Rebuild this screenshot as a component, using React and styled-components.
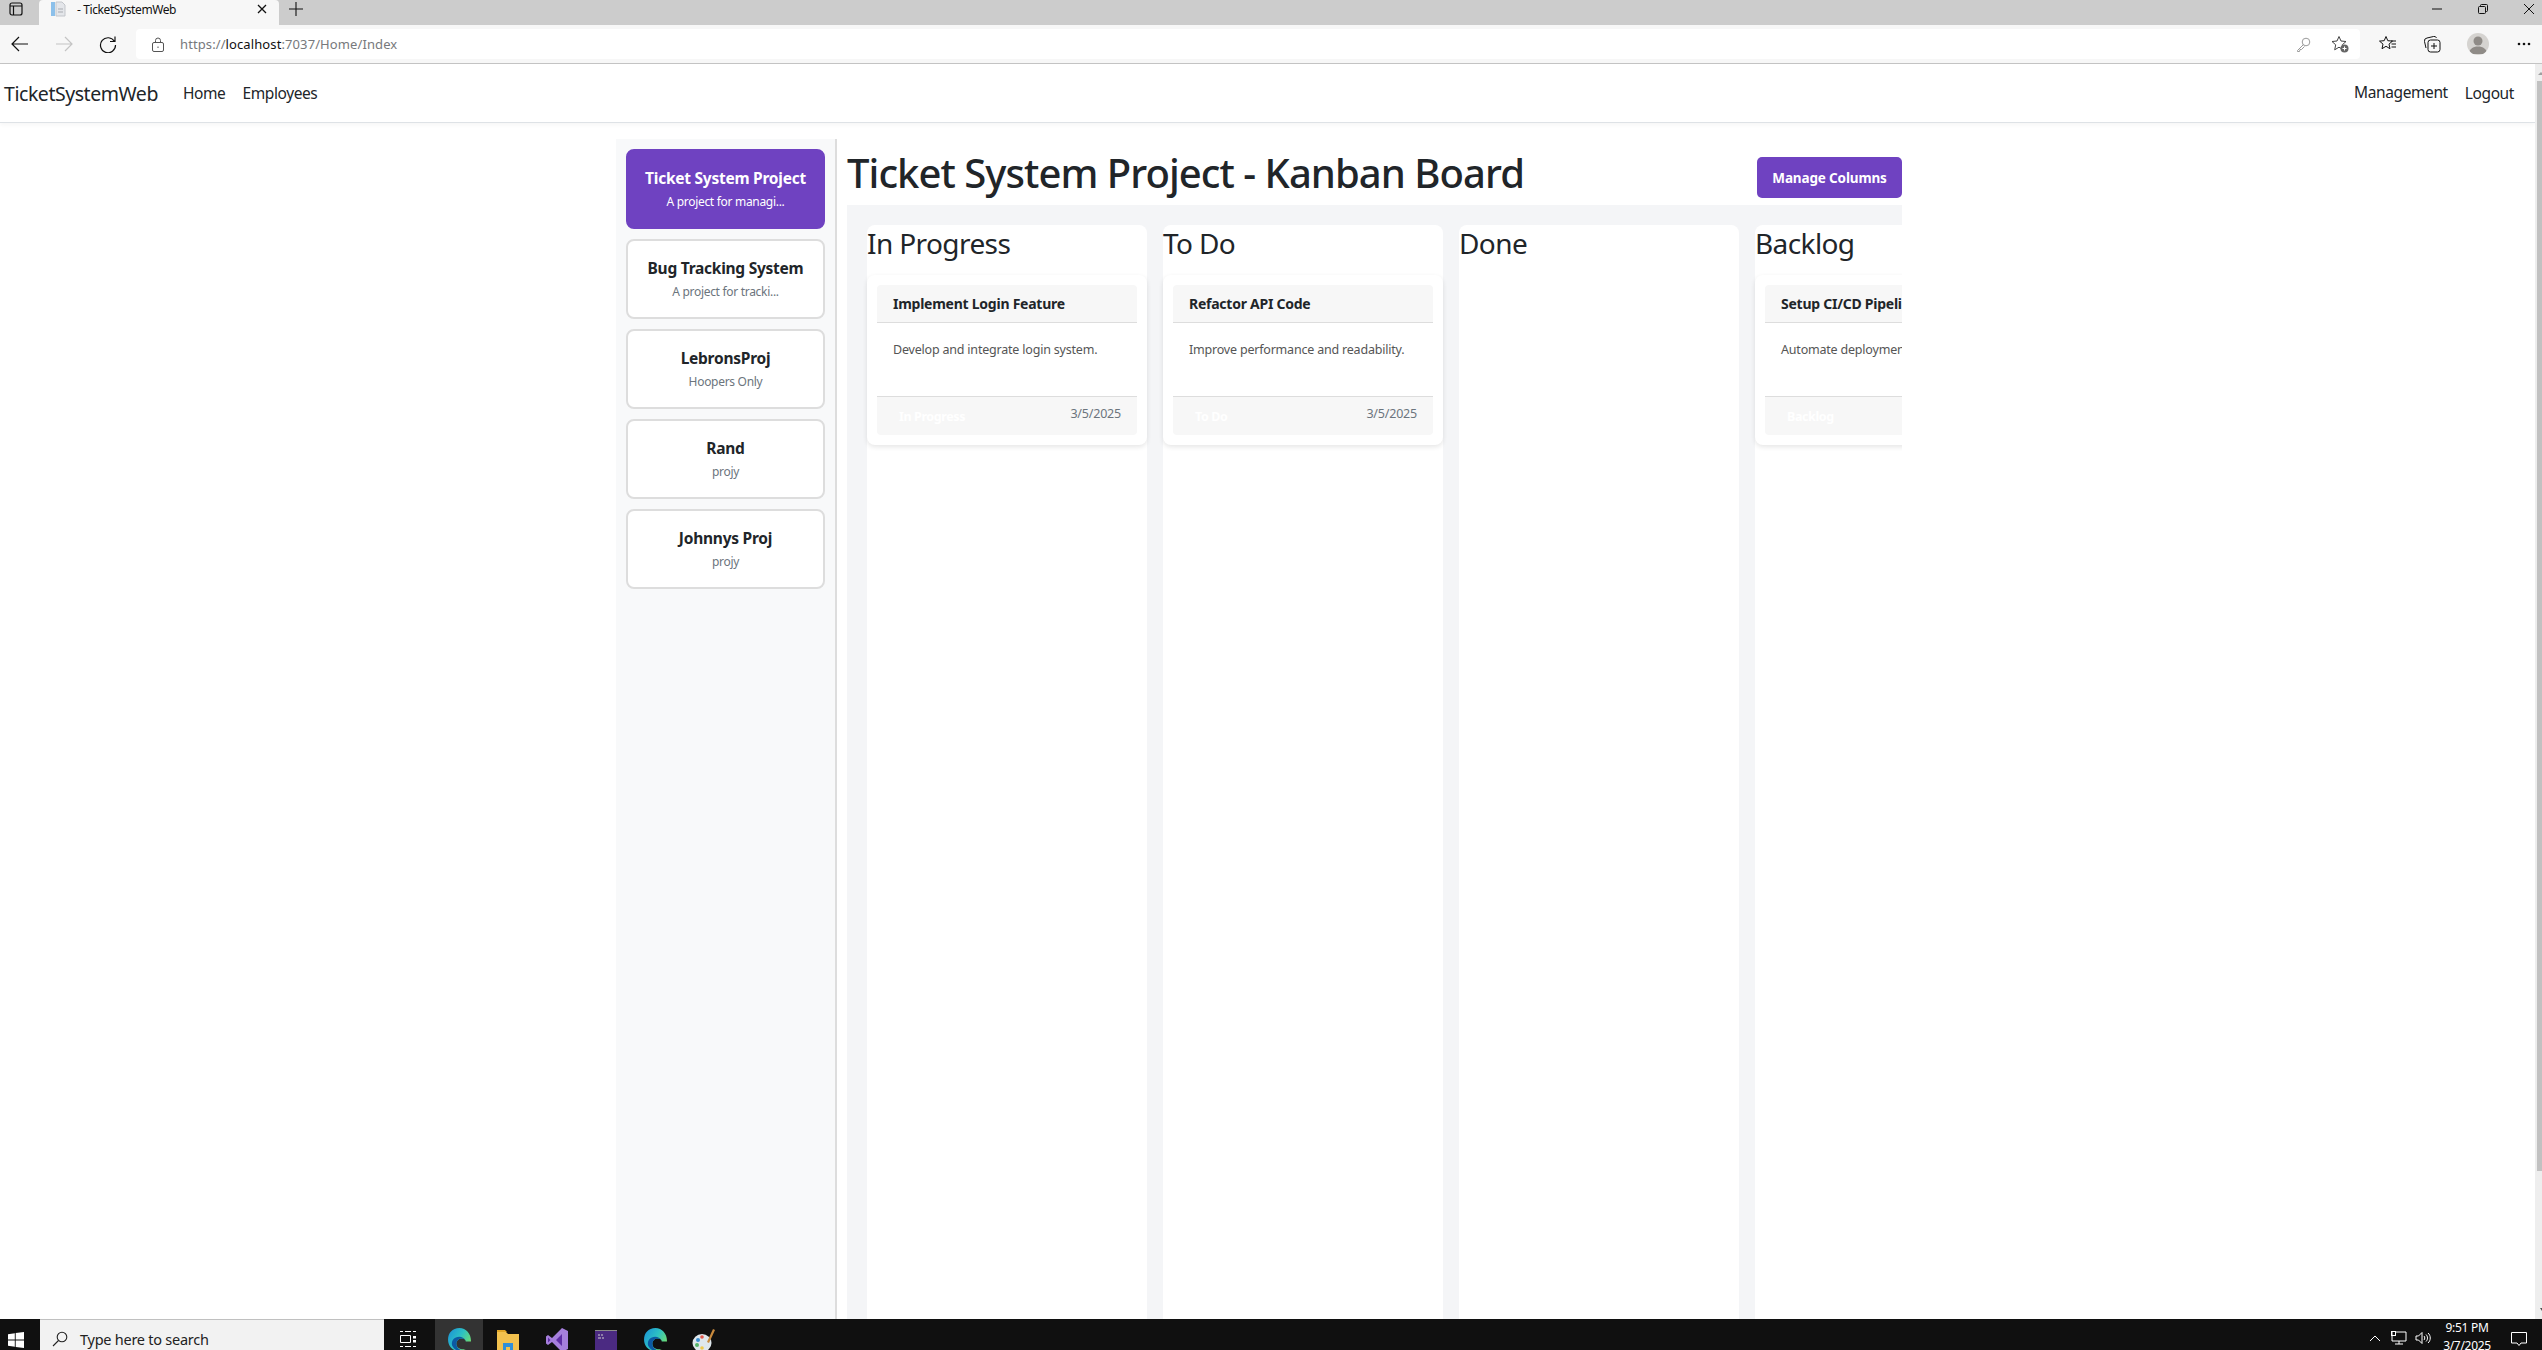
import React from "react";
import styled, { createGlobalStyle } from "styled-components";

const font = `"Noto Sans", "Open Sans", "Liberation Sans", sans-serif`;

const Global = createGlobalStyle`
  html, body { margin: 0; padding: 0; height: 100%; background: #fff; overflow: hidden; }
  * { box-sizing: border-box; }
`;

const Screen = styled.div`
  width: 2542px;
  height: 1350px;
  display: flex;
  flex-direction: column;
  overflow: hidden;
  font-family: ${font};
  color: #212529;
`;

/* browser chrome */
const TabStrip = styled.div`
  height: 25px;
  flex: none;
  background: #cccccc;
  display: flex;
  align-items: stretch;
`;

const TabSide = styled.div`
  width: 39px;
  display: flex;
  align-items: center;
  justify-content: center;
  padding: 0 7px 7px 0;
`;

const Tab = styled.div`
  width: 240px;
  background: #f7f7f7;
  border-radius: 4px 4px 0 0;
  display: flex;
  align-items: center;
  padding: 0 12px 7px 11px;
  font-size: 12px;
  color: #111;
  letter-spacing: -0.4px;
`;

const TabTitle = styled.span`
  flex: 1;
  margin-left: 11px;
`;

const NewTab = styled.div`
  width: 34px;
  display: flex;
  align-items: center;
  justify-content: center;
  padding-bottom: 7px;
`;

const WindowButtons = styled.div`
  margin-left: auto;
  display: flex;
  align-items: center;
  gap: 36px;
  padding: 0 8px 7px 0;
`;

const Toolbar = styled.div`
  height: 39px;
  flex: none;
  background: #f7f7f7;
  border-bottom: 1px solid #c4c4c4;
  padding-top: 4px;
  display: flex;
  align-items: flex-start;
`;

const ToolButton = styled.div`
  width: 40px;
  height: 30px;
  flex: none;
  margin-right: ${(p) => p.$gap}px;
  display: flex;
  align-items: center;
  justify-content: center;
`;

const AddressBar = styled.div`
  flex: 1;
  height: 30px;
  background: #fff;
  border-radius: 4px;
  display: flex;
  align-items: center;
  padding: 0 11px 0 15px;
  font-size: 13px;
  color: #77797c;
  letter-spacing: 0.1px;
`;

const LockIcon = styled.svg`
  margin-right: 15px;
`;

const Host = styled.span`
  color: #111;
`;

const AddressIcons = styled.div`
  margin-left: auto;
  display: flex;
  align-items: center;
  gap: 20px;
`;

const ToolRight = styled.div`
  width: 182px;
  height: 30px;
  flex: none;
  display: flex;
  align-items: center;
  gap: 26px;
  padding-left: 19px;
`;

const Avatar = styled.div`
  width: 22px;
  height: 22px;
  border-radius: 50%;
  background: #d5d3d0;
  overflow: hidden;
`;

const MoreDots = styled.svg`
  margin-left: 2px;
`;

/* page */
const Viewport = styled.div`
  flex: 1;
  min-height: 0;
  display: flex;
`;

const Page = styled.div`
  flex: 1;
  min-width: 0;
  display: flex;
  flex-direction: column;
`;

const Navbar = styled.nav`
  height: 59px;
  flex: none;
  background: #fff;
  border-bottom: 1px solid #dee2e6;
  box-shadow: 0 2px 4px rgba(0, 0, 0, 0.04);
  display: flex;
  align-items: center;
  padding: 0 21px 0 4px;
  font-size: 15.5px;
  letter-spacing: -0.4px;
`;

const Brand = styled.span`
  font-size: 19.5px;
  margin-right: 25px;
  letter-spacing: -0.45px;
`;

const NavLink = styled.span`
  margin-right: ${(p) => p.$gap}px;
  position: relative;
  top: ${(p) => (p.$up ? -1 : 0)}px;
`;

const NavRight = styled.div`
  margin-left: auto;
  display: flex;
  align-items: center;
`;

const Content = styled.div`
  flex: 1;
  min-height: 0;
  display: flex;
  padding: 16px 0 0 616px;
`;

const Sidebar = styled.aside`
  width: 221px;
  flex: none;
  background: #f8f9fa;
  border-right: 2px solid #dddddd;
  padding: 10px 10px 0 10px;
  display: flex;
  flex-direction: column;
  gap: 10px;
`;

const ProjectCard = styled.div`
  width: 199px;
  height: 80px;
  border-radius: 8px;
  border: 2px solid ${(p) => (p.$active ? "#6f42c1" : "#dddddd")};
  background: ${(p) => (p.$active ? "#6f42c1" : "#fff")};
  color: ${(p) => (p.$active ? "#fff" : "#212529")};
  display: flex;
  flex-direction: column;
  align-items: center;
  text-align: center;
  padding-top: 15px;
`;

const ProjectName = styled.div`
  font-size: 15.5px;
  font-weight: 700;
  line-height: 24px;
  letter-spacing: -0.25px;
  white-space: nowrap;
`;

const ProjectDesc = styled.div`
  font-size: 12px;
  line-height: 18px;
  margin-top: 3px;
  color: ${(p) => (p.$active ? "#fff" : "#6c757d")};
  letter-spacing: -0.3px;
  white-space: nowrap;
`;

const Main = styled.main`
  width: 1055px;
  margin-left: 10px;
  flex: none;
  display: flex;
  flex-direction: column;
  min-height: 0;
`;

const Header = styled.header`
  height: 66px;
  flex: none;
  display: flex;
  align-items: flex-start;
  justify-content: space-between;
`;

const Title = styled.h1`
  margin: 6px 0 0;
  font-size: 40px;
  font-weight: 500;
  line-height: 56px;
  letter-spacing: -0.95px;
  white-space: nowrap;
`;

const ManageButton = styled.button`
  width: 145px;
  height: 41px;
  margin-top: 18px;
  border: none;
  border-radius: 5px;
  background: #6f42c1;
  color: #fff;
  font-family: ${font};
  font-size: 13.5px;
  font-weight: 700;
  letter-spacing: -0.15px;
  padding: 0;
`;

const Board = styled.div`
  flex: 1;
  min-height: 0;
  background: #f4f5f7;
  padding: 20px 0 0 20px;
  display: flex;
  gap: 16px;
  overflow: hidden;
`;

const Column = styled.section`
  width: 280px;
  flex: none;
  background: #fff;
  border-radius: 8px 8px 0 0;
`;

const ColumnTitle = styled.h2`
  margin: 0 0 13px;
  font-size: 28px;
  font-weight: 400;
  line-height: 37px;
  letter-spacing: -0.6px;
`;

const TaskCard = styled.article`
  height: 170px;
  background: #fff;
  border-radius: 8px;
  box-shadow: 0 2px 5px rgba(0, 0, 0, 0.1);
  padding: 10px;
  display: flex;
  flex-direction: column;
`;

const TaskHeader = styled.div`
  height: 38px;
  flex: none;
  background: #f7f7f7;
  border-bottom: 1px solid #dddddd;
  border-radius: 4px 4px 0 0;
  padding: 0 16px;
  display: flex;
  align-items: center;
  font-size: 14px;
  font-weight: 700;
  letter-spacing: -0.25px;
  white-space: nowrap;
  overflow: hidden;
`;

const TaskBody = styled.div`
  flex: 1;
  padding: 17px 16px 0;
  font-size: 12.5px;
  line-height: 20px;
  color: #555;
  letter-spacing: -0.2px;
  white-space: nowrap;
  overflow: hidden;
`;

const TaskFooter = styled.div`
  height: 39px;
  flex: none;
  background: #f7f7f7;
  border-top: 1px solid #dddddd;
  border-radius: 0 0 4px 4px;
  padding: 0 16px 5px 22px;
  display: flex;
  align-items: center;
  justify-content: space-between;
`;

const StatusBadge = styled.span`
  color: #fff;
  font-size: 12.5px;
  font-weight: 700;
  letter-spacing: -0.4px;
  position: relative;
  top: 3px;
`;

const TaskDate = styled.span`
  color: #6c757d;
  font-size: 12.5px;
  letter-spacing: -0.2px;
`;

const Scrollbar = styled.div`
  width: 7px;
  flex: none;
  background: #eeeeee;
  padding-top: 7px;
  display: flex;
  flex-direction: column;
`;

const ScrollThumb = styled.div`
  width: 5px;
  height: 1090px;
  margin: 6px 0 0 2px;
  background: #c1c1c1;
`;

const DownArrow = styled.svg`
  margin: auto 0 7px;
`;

/* windows taskbar, cut off by the bottom of the screen */
const Taskbar = styled.div`
  height: 31px;
  flex: none;
  background: #101010;
  display: flex;
  overflow: hidden;
  color: #fff;
`;

const StartButton = styled.div`
  width: 40px;
  flex: none;
  display: flex;
  align-items: flex-start;
  justify-content: center;
  padding: 13px 8px 0 0;
`;

const SearchBox = styled.div`
  width: 344px;
  flex: none;
  background: #f2f2f2;
  border-top: 1px solid #c0c0c0;
  color: #222;
  display: flex;
  align-items: center;
  gap: 12px;
  padding: 8px 0 0 12px;
  font-size: 14.5px;
  letter-spacing: -0.25px;
`;

const TaskIcon = styled.div`
  width: 48px;
  flex: none;
  margin-right: ${(p) => p.$gap ?? 1}px;
  display: flex;
  align-items: flex-start;
  justify-content: center;
  padding-top: ${(p) => p.$top}px;
  background: ${(p) => (p.$active ? "#333333" : "transparent")};
`;

const Tray = styled.div`
  margin-left: auto;
  display: flex;
  align-items: flex-start;
  padding-top: 12px;
`;

const TrayIcon = styled.div`
  width: 24px;
  display: flex;
  justify-content: center;
`;

const Chevron = styled.svg`
  margin-top: 3px;
`;

const Clock = styled.div`
  width: 58px;
  margin: -12px 0 0 3px;
  text-align: center;
  font-size: 12px;
  line-height: 18px;
  letter-spacing: -0.3px;
  white-space: nowrap;
`;

const Notify = styled.div`
  width: 46px;
  display: flex;
  justify-content: center;
`;

const Favicon = () => (
  <svg width="16" height="16" viewBox="0 0 16 16">
    <rect x="1" y="1" width="4" height="14" fill="#8cc0ea" />
    <path d="M6 1h6l3 3v11H6z" fill="#e4e6ea" stroke="#c3c6cb" />
    <path d="M8 8h5M8 11h5" stroke="#a8abb0" />
  </svg>
);

const Edge = ({ id }) => (
  <svg width="25" height="25" viewBox="0 0 24 24">
    <defs>
      <linearGradient id={id} x1="0" y1="0" x2="1" y2="0.6">
        <stop offset="0" stopColor="#1a8fd8" />
        <stop offset="0.55" stopColor="#2cc0c4" />
        <stop offset="1" stopColor="#6fdc70" />
      </linearGradient>
    </defs>
    <path d="M12 1C5 1 1 6 1 12c0 6.500 4.500 11 10.500 11 2.500 0 4.500-.6 6.500-2-4 1-9-.5-9-5 0-3 2.500-5 5-5 3 0 4 1.500 4 3h5c.4-7-4.500-13-11-13z" fill={`url(#${id})`} />
    <path d="M9 16c0-3 2.500-5 5-5 2 0 3.200.7 3.700 1.700C16 9.500 12 8.500 8.500 10 5 11.500 4 15 5 18c1.500 3 4 5 7.500 5 1 0 1.700-.1 2.500-.3-3-.7-6-3-6-6.700z" fill="#0c59a4" />
  </svg>
);

function TaskColumn({ title, task }) {
  return (
    <Column>
      <ColumnTitle>{title}</ColumnTitle>
      {task && (
        <TaskCard>
          <TaskHeader>{task.name}</TaskHeader>
          <TaskBody>{task.text}</TaskBody>
          <TaskFooter>
            <StatusBadge>{title}</StatusBadge>
            <TaskDate>3/5/2025</TaskDate>
          </TaskFooter>
        </TaskCard>
      )}
    </Column>
  );
}

const projects = [
  { name: "Ticket System Project", desc: "A project for managi...", active: true },
  { name: "Bug Tracking System", desc: "A project for tracki..." },
  { name: "LebronsProj", desc: "Hoopers Only" },
  { name: "Rand", desc: "projy" },
  { name: "Johnnys Proj", desc: "projy" },
];

const columns = [
  { title: "In Progress", task: { name: "Implement Login Feature", text: "Develop and integrate login system." } },
  { title: "To Do", task: { name: "Refactor API Code", text: "Improve performance and readability." } },
  { title: "Done" },
  { title: "Backlog", task: { name: "Setup CI/CD Pipeline", text: "Automate deployment process." } },
];

export default function App() {
  return (
    <Screen>
      <Global />
      <TabStrip>
        <TabSide>
          <svg width="14" height="14" viewBox="0 0 14 14" fill="none" stroke="#111" strokeWidth="1.200">
            <rect x="1" y="1" width="12" height="12" rx="2" />
            <path d="M1 4h12M4.500 4v9" />
          </svg>
        </TabSide>
        <Tab>
          <Favicon />
          <TabTitle>- TicketSystemWeb</TabTitle>
          <svg width="10" height="10" viewBox="0 0 10 10">
            <path d="M1 1l8 8M9 1l-8 8" stroke="#111" strokeWidth="1.300" />
          </svg>
        </Tab>
        <NewTab>
          <svg width="14" height="14" viewBox="0 0 14 14">
            <path d="M7 0v14M0 7h14" stroke="#111" strokeWidth="1.100" />
          </svg>
        </NewTab>
        <WindowButtons>
          <svg width="10" height="10" viewBox="0 0 10 10"><path d="M0 5h10" stroke="#111" /></svg>
          <svg width="10" height="10" viewBox="0 0 10 10" fill="none" stroke="#111"><rect x=".5" y="2.500" width="7" height="7" rx="1" /><path d="M2.500 2.500V1.500a1 1 0 0 1 1-1h5a1 1 0 0 1 1 1v5a1 1 0 0 1-1 1h-1" /></svg>
          <svg width="10" height="10" viewBox="0 0 10 10"><path d="M0 0l10 10M10 0L0 10" stroke="#111" /></svg>
        </WindowButtons>
      </TabStrip>
      <Toolbar>
        <ToolButton $gap={4}>
          <svg width="18" height="16" viewBox="0 0 18 16" fill="none" stroke="#111" strokeWidth="1.200"><path d="M17 8H1M8 1L1 8l7 7" /></svg>
        </ToolButton>
        <ToolButton $gap={4}>
          <svg width="18" height="16" viewBox="0 0 18 16" fill="none" stroke="#c4c4c4" strokeWidth="1.200"><path d="M1 8h16M10 1l7 7-7 7" /></svg>
        </ToolButton>
        <ToolButton $gap={8}>
          <svg width="18" height="18" viewBox="0 0 18 18" fill="none" stroke="#111" strokeWidth="1.200"><path d="M15.500 6.500A7.500 7.500 0 1 0 16.500 10M16 1.500v5h-5" /></svg>
        </ToolButton>
        <AddressBar>
          <LockIcon width="14" height="15" viewBox="0 0 14 15" fill="none" stroke="#555"><rect x="1.500" y="5.500" width="11" height="9" rx="1.500" /><path d="M4.500 5.500V3.500a2.500 2.500 0 0 1 5 0v2M7 9.500v1.500" /></LockIcon>
          <span>https://<Host>localhost</Host>:7037/Home/Index</span>
          <AddressIcons>
            <svg width="15" height="15" viewBox="0 0 15 15" fill="none" stroke="#9a9a9a"><circle cx="10" cy="5" r="3.800" /><path d="M7.500 7.500L1.500 13.500v1h2l.5-2h1.500l3-3" /></svg>
            <svg width="18" height="18" viewBox="0 0 18 18"><path d="M8 1.500l2 4.500 5 .5-3.700 3.300 1 5-4.300-2.600L3.700 14.800l1-5L1 6.500 6 6z" fill="none" stroke="#444" /><circle cx="13.500" cy="13.500" r="4" fill="#666" /><path d="M11.500 13.500h4M13.500 11.500v4" stroke="#fff" /></svg>
          </AddressIcons>
        </AddressBar>
        <ToolRight>
          <svg width="18" height="18" viewBox="0 0 18 18" fill="none" stroke="#111"><path d="M7 1.500l1.800 4.200 4.700.4-3.500 3 1 4.600-4-2.400-4 2.400 1-4.600-3.500-3 4.700-.4z" /><path d="M12 6h5M12.500 9h4.500M12.500 12h4.500" /></svg>
          <svg width="18" height="18" viewBox="0 0 18 18" fill="none" stroke="#111"><rect x="5" y="5" width="12" height="12" rx="2.500" /><path d="M11 8v6M8 11h6M3 13L1.500 6.500A3 3 0 0 1 4 3l6.500-1.500a2.500 2.500 0 0 1 3 1.500" /></svg>
          <Avatar>
            <svg width="22" height="22" viewBox="0 0 22 22" fill="#8f8b87"><circle cx="11" cy="8" r="4.500" /><path d="M2 21c0-5 4-7.500 9-7.500s9 2.500 9 7.500z" /></svg>
          </Avatar>
          <MoreDots width="14" height="4" viewBox="0 0 14 4" fill="#111"><circle cx="2" cy="2" r="1.300" /><circle cx="7" cy="2" r="1.300" /><circle cx="12" cy="2" r="1.300" /></MoreDots>
        </ToolRight>
      </Toolbar>
      <Viewport>
        <Page>
          <Navbar>
            <Brand>TicketSystemWeb</Brand>
            <NavLink $gap={17}>Home</NavLink>
            <NavLink $gap={0}>Employees</NavLink>
            <NavRight>
              <NavLink $gap={17} $up>Management</NavLink>
              <NavLink $gap={0}>Logout</NavLink>
            </NavRight>
          </Navbar>
          <Content>
            <Sidebar>
              {projects.map((p) => (
                <ProjectCard key={p.name} $active={p.active}>
                  <ProjectName>{p.name}</ProjectName>
                  <ProjectDesc $active={p.active}>{p.desc}</ProjectDesc>
                </ProjectCard>
              ))}
            </Sidebar>
            <Main>
              <Header>
                <Title>Ticket System Project - Kanban Board</Title>
                <ManageButton>Manage Columns</ManageButton>
              </Header>
              <Board>
                {columns.map((c) => (
                  <TaskColumn key={c.title} title={c.title} task={c.task} />
                ))}
              </Board>
            </Main>
          </Content>
        </Page>
        <Scrollbar>
          <svg width="7" height="4" viewBox="0 0 7 4"><path d="M6 1L3 4h6z" fill="#a0a0a0" /></svg>
          <ScrollThumb />
          <DownArrow width="7" height="4" viewBox="0 0 7 4"><path d="M5 0h4L7 3z" fill="#505050" /></DownArrow>
        </Scrollbar>
      </Viewport>
      <Taskbar>
        <StartButton>
          <svg width="16" height="16" viewBox="0 0 16 16" fill="#fff"><path d="M0 2.200L6.800 1.200V7.500H0zM7.700 1.100L16 0V7.500H7.700zM0 8.400H6.800V14.800L0 13.800zM7.700 8.400H16V16L7.700 14.900z" /></svg>
        </StartButton>
        <SearchBox>
          <svg width="16" height="16" viewBox="0 0 16 16" fill="none" stroke="#222" strokeWidth="1.100"><circle cx="10" cy="6" r="4.800" /><path d="M6.500 9.500L1 15" /></svg>
          Type here to search
        </SearchBox>
        <TaskIcon $top={12} $gap={3}>
          <svg width="16" height="16" viewBox="0 0 16 16" fill="none" stroke="#fff"><path d="M0 .5h3M5 .5h6M0 15.500h3M5 15.500h6M.5 4.500h10v7H.5z" /><path d="M13 .5h3M13 15.500h3" /><rect x="13" y="5" width="3" height="2.500" fill="#fff" stroke="none" /><rect x="13" y="9" width="3" height="2.500" fill="#fff" stroke="none" /></svg>
        </TaskIcon>
        <TaskIcon $active $top={8}><Edge id="edge-a" /></TaskIcon>
        <TaskIcon $top={10}>
          <svg width="22" height="24" viewBox="0 0 22 24"><path d="M0 3h9l2 2h11v17H0z" fill="#f2c14e" /><path d="M0 1h8l2 2H0z" fill="#e0a526" /><path d="M6 22v-8h10v8h-3v-4H9v4z" fill="#2f8fd8" /></svg>
        </TaskIcon>
        <TaskIcon $top={8}>
          <svg width="24" height="26" viewBox="0 0 24 26"><path d="M17 1l6 3v18l-6 3L7 15l-4 3-2-1.500V9.500L3 8l4 3z" fill="#a67fdc" /><path d="M17 7v12l-6-6zM3 10.500v5L5.500 13z" fill="#5f2ea5" /></svg>
        </TaskIcon>
        <TaskIcon $top={11}>
          <svg width="22" height="24" viewBox="0 0 22 24"><rect width="22" height="24" fill="#4b2a82" /><path d="M0 .5h22" stroke="#8a8a8a" /><path d="M3 5h2M6 5h2M3 8h3M7 8h2" stroke="#cfcfcf" /></svg>
        </TaskIcon>
        <TaskIcon $top={8}><Edge id="edge-b" /></TaskIcon>
        <TaskIcon $top={9}>
          <svg width="24" height="26" viewBox="0 0 24 26"><ellipse cx="10" cy="15" rx="9.500" ry="9" fill="#dfe7ec" /><circle cx="6" cy="12" r="2" fill="#3d8fd1" /><circle cx="5" cy="17" r="2" fill="#56b56a" /><circle cx="10" cy="9" r="1.800" fill="#e2574c" /><circle cx="10" cy="20" r="1.800" fill="#efc94c" /><path d="M21 1l2 1-6 13-2-1z" fill="#c98a3d" /></svg>
        </TaskIcon>
        <Tray>
          <TrayIcon>
            <Chevron width="12" height="8" viewBox="0 0 12 8" fill="none" stroke="#fff"><path d="M1 7l5-5 5 5" /></Chevron>
          </TrayIcon>
          <TrayIcon>
            <svg width="16" height="14" viewBox="0 0 16 14" fill="none" stroke="#fff"><path d="M4 1h11v9H1V1M8 10v3M4 13h8" /><rect x=".5" y=".5" width="4" height="4" /></svg>
          </TrayIcon>
          <TrayIcon>
            <svg width="16" height="14" viewBox="0 0 16 14" fill="none" stroke="#fff"><path d="M1 5h2.500L7 1.500v11L3.500 9H1zM9 5c1 1 1 3 0 4M11 3.500c2 2 2 5 0 7M13 2c3 2.500 3 7.500 0 10" /></svg>
          </TrayIcon>
          <Clock>9:51 PM<br />3/7/2025</Clock>
          <Notify>
            <svg width="16" height="16" viewBox="0 0 16 16" fill="none" stroke="#fff"><path d="M.5 1.500h15v10.500H10L8 14.500 6 12H.5z" /></svg>
          </Notify>
        </Tray>
      </Taskbar>
    </Screen>
  );
}
